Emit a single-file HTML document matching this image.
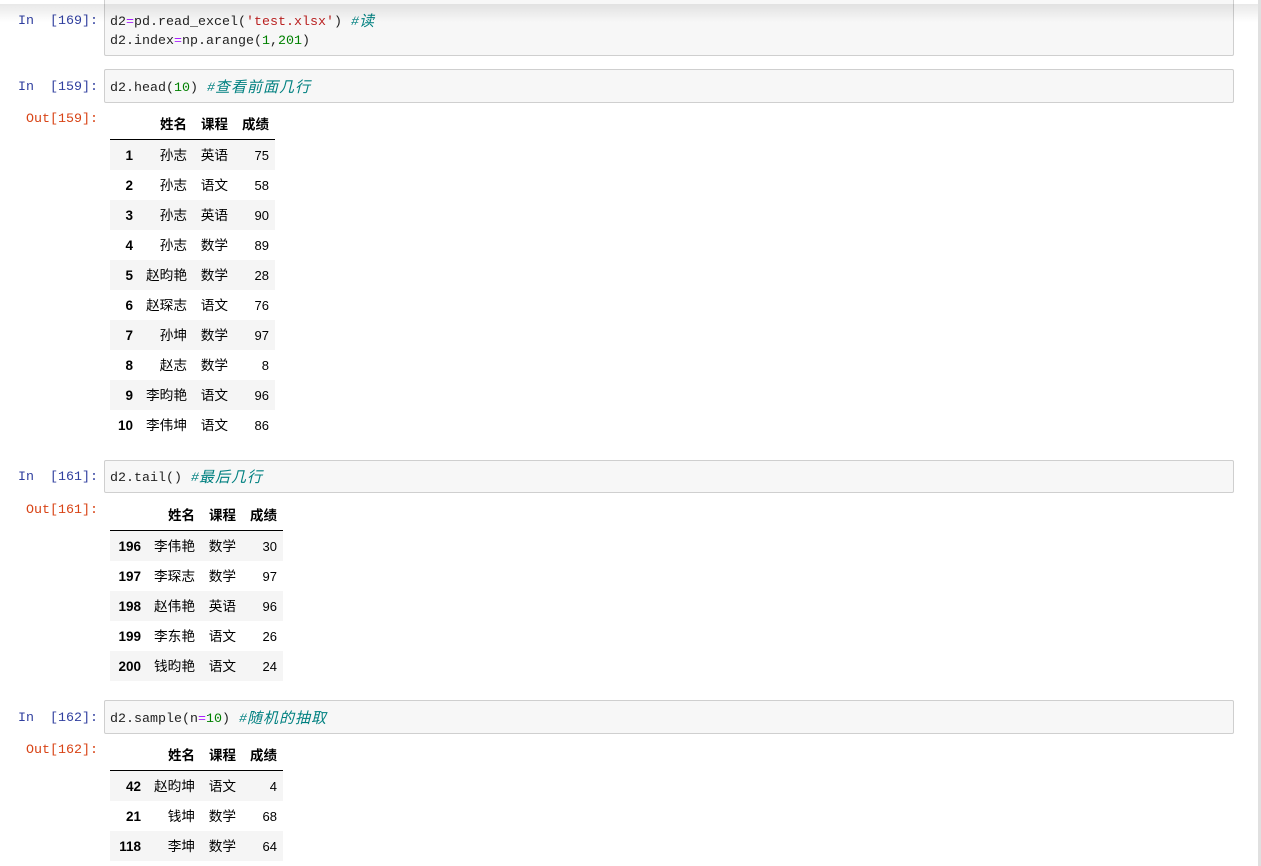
<!DOCTYPE html>
<html><head><meta charset="utf-8">
<style>
html,body{margin:0;padding:0;background:#fff;}
body{width:1261px;height:866px;overflow:hidden;position:relative;}
.a{position:absolute;}
.sb{left:1258px;top:0;width:3px;height:866px;background:#e0e0e0;}
.shadow{left:0;top:4px;width:1258px;height:18px;background:linear-gradient(to bottom,rgba(0,0,0,.09),rgba(0,0,0,0));z-index:5;}
.cell{left:104px;width:1128px;background:#f7f7f7;border:1px solid #cfcfcf;border-radius:2px;}
.code{left:110px;font:13.33px/19px "Liberation Mono",monospace;color:#222;white-space:pre;}
.p{left:0;width:98px;text-align:right;font:13.33px/19px "Liberation Mono",monospace;white-space:pre;}
.in{color:#303f9f;}
.out{color:#d84315;}
.o{color:#aa22ff;}
.n{color:#008000;}
.s{color:#ba2121;}
.c{color:#008080;font-style:italic;margin-left:1px;}
.c b{font-weight:normal;font-family:"Noto Sans CJK SC",sans-serif;font-size:15px;letter-spacing:1px;line-height:0;position:relative;top:1px;}
table{position:absolute;left:110px;border-collapse:separate;border-spacing:0;table-layout:fixed;font-family:"Liberation Sans","Noto Sans CJK SC",sans-serif;font-size:13px;color:#000;}
th,td{padding:0 6px;text-align:right;height:30px;box-sizing:border-box;line-height:16px;}
th:nth-child(3),td:nth-child(3){padding-right:7px;}
thead th{height:31px;font-weight:bold;border-bottom:1px solid #000;font-size:13.5px;padding-top:2px;}
tbody th{font-weight:bold;font-size:13.5px;padding-top:1px;}
tbody td{padding-top:1px;}
tbody td.t{font-size:13.67px;padding-top:2px;}
tbody tr:nth-child(odd){background:#f5f5f5;}
tbody td,tbody th{height:30px;}
</style></head><body>
<div class="a sb"></div>
<div class="a shadow"></div>

<div class="a cell" style="top:-6px;height:60px;"></div>
<div class="a p in" style="top:12px;">In  [169]:</div>
<div class="a code" style="top:13px;">d2<span class="o">=</span>pd.read_excel(<span class="s">'test.xlsx'</span>) <span class="c">#<b>读</b></span></div>
<div class="a code" style="top:32px;">d2.index<span class="o">=</span>np.arange(<span class="n">1</span>,<span class="n">201</span>)</div>

<div class="a cell" style="top:69px;height:32px;"></div>
<div class="a p in" style="top:78px;">In  [159]:</div>
<div class="a code" style="top:79px;">d2.head(<span class="n">10</span>) <span class="c">#<b>查看前面几行</b></span></div>
<div class="a p out" style="top:110px;">Out[159]:</div>
<table style="top:109px;width:165px;">
<colgroup><col style="width:29px"><col style="width:54px"><col style="width:42px"><col style="width:40px"></colgroup>
<thead><tr><th></th><th>姓名</th><th>课程</th><th>成绩</th></tr></thead>
<tbody>
<tr><th>1</th><td class="t">孙志</td><td class="t">英语</td><td>75</td></tr>
<tr><th>2</th><td class="t">孙志</td><td class="t">语文</td><td>58</td></tr>
<tr><th>3</th><td class="t">孙志</td><td class="t">英语</td><td>90</td></tr>
<tr><th>4</th><td class="t">孙志</td><td class="t">数学</td><td>89</td></tr>
<tr><th>5</th><td class="t">赵昀艳</td><td class="t">数学</td><td>28</td></tr>
<tr><th>6</th><td class="t">赵琛志</td><td class="t">语文</td><td>76</td></tr>
<tr><th>7</th><td class="t">孙坤</td><td class="t">数学</td><td>97</td></tr>
<tr><th>8</th><td class="t">赵志</td><td class="t">数学</td><td>8</td></tr>
<tr><th>9</th><td class="t">李昀艳</td><td class="t">语文</td><td>96</td></tr>
<tr><th>10</th><td class="t">李伟坤</td><td class="t">语文</td><td>86</td></tr>
</tbody></table>

<div class="a cell" style="top:460px;height:31px;"></div>
<div class="a p in" style="top:468px;">In  [161]:</div>
<div class="a code" style="top:469px;">d2.tail() <span class="c">#<b>最后几行</b></span></div>
<div class="a p out" style="top:501px;">Out[161]:</div>
<table style="top:500px;width:173px;">
<colgroup><col style="width:37px"><col style="width:54px"><col style="width:42px"><col style="width:40px"></colgroup>
<thead><tr><th></th><th>姓名</th><th>课程</th><th>成绩</th></tr></thead>
<tbody>
<tr><th>196</th><td class="t">李伟艳</td><td class="t">数学</td><td>30</td></tr>
<tr><th>197</th><td class="t">李琛志</td><td class="t">数学</td><td>97</td></tr>
<tr><th>198</th><td class="t">赵伟艳</td><td class="t">英语</td><td>96</td></tr>
<tr><th>199</th><td class="t">李东艳</td><td class="t">语文</td><td>26</td></tr>
<tr><th>200</th><td class="t">钱昀艳</td><td class="t">语文</td><td>24</td></tr>
</tbody></table>

<div class="a cell" style="top:700px;height:32px;"></div>
<div class="a p in" style="top:709px;">In  [162]:</div>
<div class="a code" style="top:710px;">d2.sample(n<span class="o">=</span><span class="n">10</span>) <span class="c">#<b>随机的抽取</b></span></div>
<div class="a p out" style="top:741px;">Out[162]:</div>
<table style="top:740px;width:173px;">
<colgroup><col style="width:37px"><col style="width:54px"><col style="width:42px"><col style="width:40px"></colgroup>
<thead><tr><th></th><th>姓名</th><th>课程</th><th>成绩</th></tr></thead>
<tbody>
<tr><th>42</th><td class="t">赵昀坤</td><td class="t">语文</td><td>4</td></tr>
<tr><th>21</th><td class="t">钱坤</td><td class="t">数学</td><td>68</td></tr>
<tr><th>118</th><td class="t">李坤</td><td class="t">数学</td><td>64</td></tr>
</tbody></table>
</body></html>
